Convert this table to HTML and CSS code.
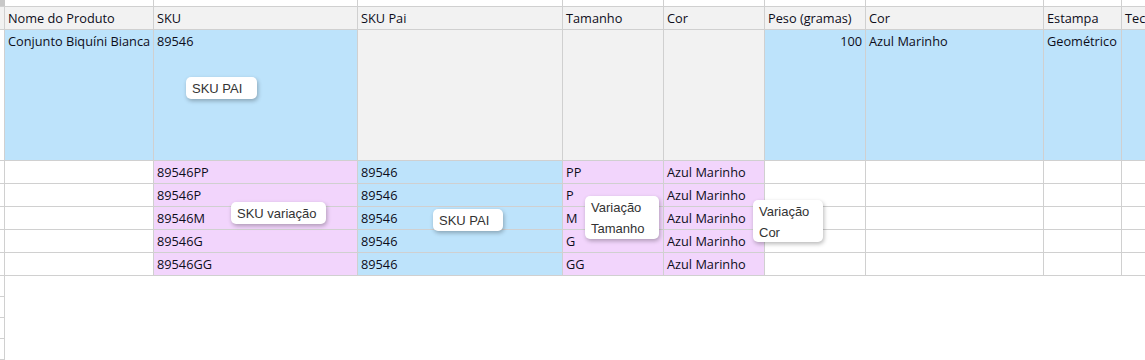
FILE: index.html
```html
<!DOCTYPE html>
<html lang="pt-BR">
<head>
<meta charset="utf-8">
<title>Planilha de produtos</title>
<link rel="stylesheet" href="styles.css">
</head>
<body>
<div class="sheet">
  <div class="grid">
    <!-- column letter band (cropped) -->
    <div class="c band corner"></div>
    <div class="c band"></div><div class="c band"></div><div class="c band"></div><div class="c band"></div>
    <div class="c band"></div><div class="c band"></div><div class="c band"></div><div class="c band"></div><div class="c band"></div>

    <!-- header row -->
    <div class="c hd rh"></div>
    <div class="c hd">Nome do Produto</div>
    <div class="c hd">SKU</div>
    <div class="c hd">SKU Pai</div>
    <div class="c hd">Tamanho</div>
    <div class="c hd">Cor</div>
    <div class="c hd">Peso (gramas)</div>
    <div class="c hd">Cor</div>
    <div class="c hd">Estampa</div>
    <div class="c hd">Tec</div>

    <!-- parent row -->
    <div class="c tall rh"></div>
    <div class="c tall blue">Conjunto Biquíni Bianca</div>
    <div class="c tall blue">89546</div>
    <div class="c tall gray"></div>
    <div class="c tall gray"></div>
    <div class="c tall gray"></div>
    <div class="c tall blue num">100</div>
    <div class="c tall blue">Azul Marinho</div>
    <div class="c tall blue">Geométrico</div>
    <div class="c tall blue"></div>

    <!-- variation rows -->
    <div class="c row rh"></div><div class="c row"></div>
    <div class="c row pink">89546PP</div><div class="c row blue">89546</div><div class="c row pink">PP</div><div class="c row pink">Azul Marinho</div>
    <div class="c row"></div><div class="c row"></div><div class="c row"></div><div class="c row"></div>

    <div class="c row rh"></div><div class="c row"></div>
    <div class="c row pink">89546P</div><div class="c row blue">89546</div><div class="c row pink">P</div><div class="c row pink">Azul Marinho</div>
    <div class="c row"></div><div class="c row"></div><div class="c row"></div><div class="c row"></div>

    <div class="c row rh"></div><div class="c row"></div>
    <div class="c row pink">89546M</div><div class="c row blue">89546</div><div class="c row pink">M</div><div class="c row pink">Azul Marinho</div>
    <div class="c row"></div><div class="c row"></div><div class="c row"></div><div class="c row"></div>

    <div class="c row rh"></div><div class="c row"></div>
    <div class="c row pink">89546G</div><div class="c row blue">89546</div><div class="c row pink">G</div><div class="c row pink">Azul Marinho</div>
    <div class="c row"></div><div class="c row"></div><div class="c row"></div><div class="c row"></div>

    <div class="c row rh"></div><div class="c row"></div>
    <div class="c row pink">89546GG</div><div class="c row blue">89546</div><div class="c row pink">GG</div><div class="c row pink">Azul Marinho</div>
    <div class="c row"></div><div class="c row"></div><div class="c row"></div><div class="c row"></div>

    <!-- empty rows -->
    <div class="c empty rh"></div><div class="e"></div>
    <div class="c empty rh"></div><div class="e"></div>
    <div class="c empty rh"></div><div class="e"></div>
    <div class="c empty rh"></div><div class="e"></div>
  </div>

  <div class="note n1">SKU PAI</div>
  <div class="note n2">SKU variação</div>
  <div class="note n3">SKU PAI</div>
  <div class="note n4">Variação<br>Tamanho</div>
  <div class="note n5">Variação<br>Cor</div>
</div>
</body>
</html>
```
FILE: styles.css
```css
html, body {
  margin: 0;
  padding: 0;
  background: #ffffff;
  overflow: hidden;
}

.sheet {
  position: relative;
  width: 1145px;
  height: 360px;
  overflow: hidden;
  font-family: "Open Sans", "Noto Sans", sans-serif;
  font-size: 12.75px;
  color: #0d0d1a;
}

.grid {
  display: grid;
  grid-template-columns: 5px 149px 204px 205px 101px 101px 101px 178px 78px 120px;
  grid-auto-rows: auto;
}

.c {
  box-sizing: border-box;
  border-right: 1px solid #d0d0d0;
  border-bottom: 1px solid #d0d0d0;
  padding: 0 3px;
  white-space: nowrap;
  overflow: hidden;
  line-height: 22px;
}

.rh { padding: 0; }

.band { height: 7px; background: #ffffff; }
.corner { background: #c8c8c8; }

.hd { height: 23px; background: #f2f2f2; }

.tall { height: 131px; }
.row { height: 23px; }

.empty { height: 21px; }
.e { grid-column: 2 / -1; }

.blue { background: #bde3fb; }
.pink { background: #f2d5fc; }
.gray { background: #f2f2f2; }
.num { text-align: right; }

.note {
  position: absolute;
  box-sizing: border-box;
  background: #ffffff;
  border-radius: 5px;
  box-shadow: 1px 2px 4px rgba(0, 0, 0, 0.28);
  font-family: "Liberation Sans", Arial, sans-serif;
  font-size: 13px;
  line-height: 21px;
  color: #333333;
  padding: 1px 0 0 6px;
}

.n1 { left: 186px; top: 77px; width: 71px; height: 22px; }
.n2 { left: 231px; top: 202px; width: 95px; height: 22px; }
.n3 { left: 433px; top: 209px; width: 70px; height: 22px; }
.n4 { left: 585px; top: 196px; width: 74px; height: 43px; }
.n5 { left: 753px; top: 200px; width: 70px; height: 42px; }
```
